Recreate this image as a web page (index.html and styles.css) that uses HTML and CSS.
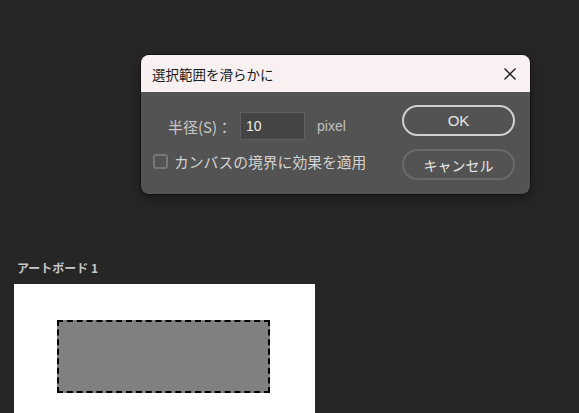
FILE: index.html
```html
<!DOCTYPE html>
<html lang="ja">
<head>
    <meta charset="UTF-8">
    <title>選択範囲を滑らかに</title>
    <link rel="stylesheet" href="styles.css">
</head>
<body>
    <div class="workspace">
        <div class="artboard-label">アートボード 1</div>
        <div class="artboard">
            <div class="selection"></div>
        </div>
    </div>

    <div class="dialog">
        <div class="dialog-title">
            <span>選択範囲を滑らかに</span>
            <svg class="close" width="14" height="14" viewBox="0 0 14 14">
                <path d="M1.5 1.5 L12.5 12.5 M12.5 1.5 L1.5 12.5" stroke="#1a1a1a" stroke-width="1.3" fill="none"/>
            </svg>
        </div>
        <div class="dialog-body">
            <div class="fields">
                <div class="field-row">
                    <span class="label">半径(S)：</span>
                    <div class="num-input">10</div>
                    <span class="unit">pixel</span>
                </div>
                <label class="check-row">
                    <span class="checkbox"></span>
                    <span>カンバスの境界に効果を適用</span>
                </label>
            </div>
            <div class="buttons">
                <button class="btn btn-primary">OK</button>
                <button class="btn">キャンセル</button>
            </div>
        </div>
    </div>
</body>
</html>
```

FILE: styles.css
```css
body {
    margin: 0;
    background-color: #262626;
    font-family: "Noto Sans CJK JP", "Noto Sans", sans-serif;
    height: 413px;
    overflow: hidden;
}
.workspace {
    padding: 259px 0 0 14px;
}
.artboard-label {
    color: #c6c6c6;
    font-size: 12px;
    font-weight: bold;
    padding-left: 3px;
    height: 25px;
    line-height: 18px;
}
.artboard {
    width: 301px;
    height: 140px;
    background-color: #ffffff;
    padding: 36px 0 0 43px;
    box-sizing: border-box;
}
.selection {
    width: 213px;
    height: 73px;
    background-color: #808080;
    border: 2px dashed #000000;
    box-sizing: border-box;
}
.dialog {
    position: absolute;
    left: 141px;
    top: 55px;
    width: 389px;
    height: 139px;
    border-radius: 8px;
    overflow: hidden;
    background-color: #535353;
    box-shadow: 0 0 0 1px rgba(0, 0, 0, 0.35), 0 4px 12px rgba(0, 0, 0, 0.4);
}
.dialog-title {
    height: 37px;
    background-color: #f8f0f1;
    display: flex;
    align-items: center;
    justify-content: space-between;
    padding: 0 13px 0 11px;
    color: #1a1a1a;
    font-size: 13.5px;
}
.close {
    margin-top: 1px;
}
.dialog-body {
    display: flex;
    justify-content: space-between;
    padding: 13px 15px 0 12px;
}
.fields {
    display: flex;
    flex-direction: column;
}
.field-row {
    display: flex;
    align-items: center;
    height: 28px;
    margin-top: 7px;
    padding-left: 15px;
    color: #c8c8c8;
    font-size: 15px;
}
.label {
    width: 72px;
}
.num-input {
    width: 58px;
    height: 26px;
    background-color: #454545;
    border: 1px solid #5f5f5f;
    color: #ececec;
    font-family: "Liberation Sans", Arial, sans-serif;
    font-size: 14px;
    line-height: 26px;
    padding-left: 5px;
    box-sizing: content-box;
    margin-right: 12px;
}
.unit {
    font-family: "Liberation Sans", Arial, sans-serif;
    font-size: 14px;
    color: #c0c0c0;
}
.check-row {
    display: flex;
    align-items: center;
    margin-top: 11px;
    color: #d2d2d2;
    font-size: 14.8px;
}
.checkbox {
    width: 11px;
    height: 11px;
    border: 2px solid #777777;
    border-radius: 3px;
    margin-right: 6px;
}
.buttons {
    display: flex;
    flex-direction: column;
    gap: 13px;
}
.btn {
    width: 113px;
    height: 31px;
    border-radius: 16px;
    border: 2px solid #6a6a6a;
    background-color: transparent;
    color: #e6e6e6;
    font-family: "Noto Sans CJK JP", sans-serif;
    font-size: 14px;
    cursor: pointer;
}
.btn-primary {
    border-color: #d0d0d0;
    font-family: "Liberation Sans", Arial, sans-serif;
    font-size: 15px;
}
```
